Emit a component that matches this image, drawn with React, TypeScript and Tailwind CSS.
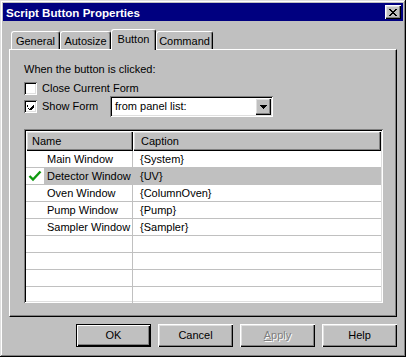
import { useState } from "react";

const rows = [
  { name: "Main Window", caption: "{System}" },
  { name: "Detector Window", caption: "{UV}" },
  { name: "Oven Window", caption: "{ColumnOven}" },
  { name: "Pump Window", caption: "{Pump}" },
  { name: "Sampler Window", caption: "{Sampler}" },
  { name: "", caption: "" },
  { name: "", caption: "" },
  { name: "", caption: "" },
  { name: "", caption: "" },
];

const tabs = [
  { label: "General", w: "w-[49px]" },
  { label: "Autosize", w: "w-[51px]" },
  { label: "Button", w: "w-[45px]" },
  { label: "Command", w: "w-[57px]" },
];

const raised =
  "shadow-[inset_1px_1px_#fff,inset_-1px_-1px_#000,inset_-2px_-2px_#808080,inset_2px_2px_#dfdfdf]";
const sunken =
  "shadow-[inset_1px_1px_#808080,inset_-1px_-1px_#fff,inset_2px_2px_#000,inset_-2px_-2px_#dfdfdf]";

function CheckBox({ checked }: { checked: boolean }) {
  return (
    <div className={`w-[13px] h-[13px] bg-white flex items-center justify-center ${sunken}`}>
      {checked && (
        <svg width="7" height="7" viewBox="0 0 7 7" shapeRendering="crispEdges">
          <path d="M0 2h1v3h1v1h1v-1h1v-1h1v-1h1v-1h1v3h-1v1h-1v1h-1v1h-1v-1h-1v-1h-1z" fill="#000" />
        </svg>
      )}
    </div>
  );
}

function DlgButton({ children, isDefault, disabled }: { children: React.ReactNode; isDefault?: boolean; disabled?: boolean }) {
  return (
    <button
      className={`w-[75px] h-[23px] bg-[#c0c0c0] flex items-center justify-center text-[11px] ${
        isDefault
          ? "border border-black shadow-[inset_1px_1px_#fff,inset_-1px_-1px_#000,inset_-2px_-2px_#808080]"
          : raised
      } ${disabled ? "text-[#808080] [text-shadow:1px_1px_#fff]" : "text-black"}`}
    >
      {children}
    </button>
  );
}

export default function App() {
  const [selected] = useState(1);

  return (
    <div className="w-[406px] h-[357px] bg-[#c0c0c0] p-[3px] flex flex-col font-['Liberation_Sans',Arial,sans-serif] text-[11px] leading-[13px] text-black shadow-[inset_-1px_-1px_#000,inset_1px_1px_#dfdfdf,inset_-2px_-2px_#808080,inset_2px_2px_#fff]">
      {/* Title bar */}
      <div className="h-[18px] bg-[#000080] flex items-center justify-between pl-[3px] pr-[2px]">
        <span className="text-white font-bold text-[11.6px]">Script Button Properties</span>
        <div className={`w-[16px] h-[14px] bg-[#c0c0c0] flex items-center justify-center ${raised}`}>
          <svg width="8" height="7" viewBox="0 0 8 7" shapeRendering="crispEdges">
            <path d="M0 0h2v1h1v1h2v-1h1v-1h2v1h-1v1h-1v1h-1v1h1v1h1v1h1v1h-2v-1h-1v-1h-2v1h-1v1h-2v-1h1v-1h1v-1h1v-1h-1v-1h-1v-1h-1z" fill="#000" />
          </svg>
        </div>
      </div>

      <div className="flex flex-col px-[6px] pt-[8px]">
        {/* Tabs */}
        <div className="flex items-end h-[20px] pl-[2px]">
          {tabs.map((t, i) =>
            i === 2 ? (
              <div
                key={t.label}
                className={`${t.w} h-[21px] mb-[-1px] relative z-10 bg-[#c0c0c0] border-t border-l border-r border-t-white border-l-white border-r-black rounded-t-[3px] shadow-[inset_-1px_0_#808080] flex items-center justify-center pb-[1px]`}
              >
                {t.label}
              </div>
            ) : (
              <div
                key={t.label}
                className={`${t.w} h-[18px] bg-[#c0c0c0] border-t border-l border-r border-t-white border-l-white border-r-black rounded-t-[3px] shadow-[inset_-1px_0_#808080] flex items-center justify-center pt-[2px]`}
              >
                {t.label}
              </div>
            )
          )}
        </div>

        {/* Panel */}
        <div className="h-[268px] border-t border-l border-white border-r border-b border-r-black border-b-black shadow-[inset_-1px_-1px_#808080] flex flex-col px-[14px]">
          <div className="mt-[13px]">When the button is clicked:</div>

          <div className="mt-[6px] flex items-center h-[13px]">
            <CheckBox checked={false} />
            <span className="ml-[5px]">Close Current Form</span>
          </div>

          <div className="mt-[1px] flex items-center h-[21px]">
            <CheckBox checked={true} />
            <span className="ml-[5px] w-[68px]">Show Form</span>
            <div className={`w-[163px] h-[21px] bg-white flex items-center justify-between pl-[5px] pr-[2px] ${sunken}`}>
              <span>from panel list:</span>
              <div className={`w-[16px] h-[17px] bg-[#c0c0c0] flex items-center justify-center ${raised}`}>
                <svg width="7" height="4" viewBox="0 0 7 4" shapeRendering="crispEdges">
                  <path d="M0 0h7v1h-1v1h-1v1h-1v1h-1v-1h-1v-1h-1v-1h-1z" fill="#000" />
                </svg>
              </div>
            </div>
          </div>

          {/* List */}
          <div className={`mt-[12px] w-[359px] h-[174px] bg-white p-[2px] flex flex-col overflow-hidden ${sunken}`}>
            <div className="flex h-[20px] shrink-0">
              <div className={`w-[107px] bg-[#c0c0c0] flex items-center pl-[6px] ${raised}`}>Name</div>
              <div className={`flex-1 bg-[#c0c0c0] flex items-center pl-[8px] ${raised}`}>Caption</div>
            </div>
            {rows.map((r, i) => (
              <div key={i} className="flex h-[17px] shrink-0 border-b border-[#c0c0c0]">
                <div className="w-[107px] flex border-r border-[#c0c0c0]">
                  <div className="w-[18px] flex items-center justify-center">
                    {i === selected && (
                      <svg width="14" height="12" viewBox="0 0 14 12">
                        <path d="M1.5 6 L5 9.5 L12.5 1.5" fill="none" stroke="#0f9a0f" strokeWidth="2.4" />
                      </svg>
                    )}
                  </div>
                  <div className={`flex-1 flex items-center pl-[3px] ${i === selected ? "bg-[#c0c0c0]" : ""}`}>{r.name}</div>
                </div>
                <div className={`flex-1 flex items-center pl-[7px] ${i === selected ? "bg-[#c0c0c0]" : ""}`}>{r.caption}</div>
              </div>
            ))}
          </div>
        </div>

        {/* Buttons */}
        <div className="mt-[7px] flex justify-end gap-[7px]">
          <DlgButton isDefault>OK</DlgButton>
          <DlgButton>Cancel</DlgButton>
          <DlgButton disabled>
            <span>
              <span className="underline">A</span>pply
            </span>
          </DlgButton>
          <DlgButton>Help</DlgButton>
        </div>
      </div>
    </div>
  );
}
